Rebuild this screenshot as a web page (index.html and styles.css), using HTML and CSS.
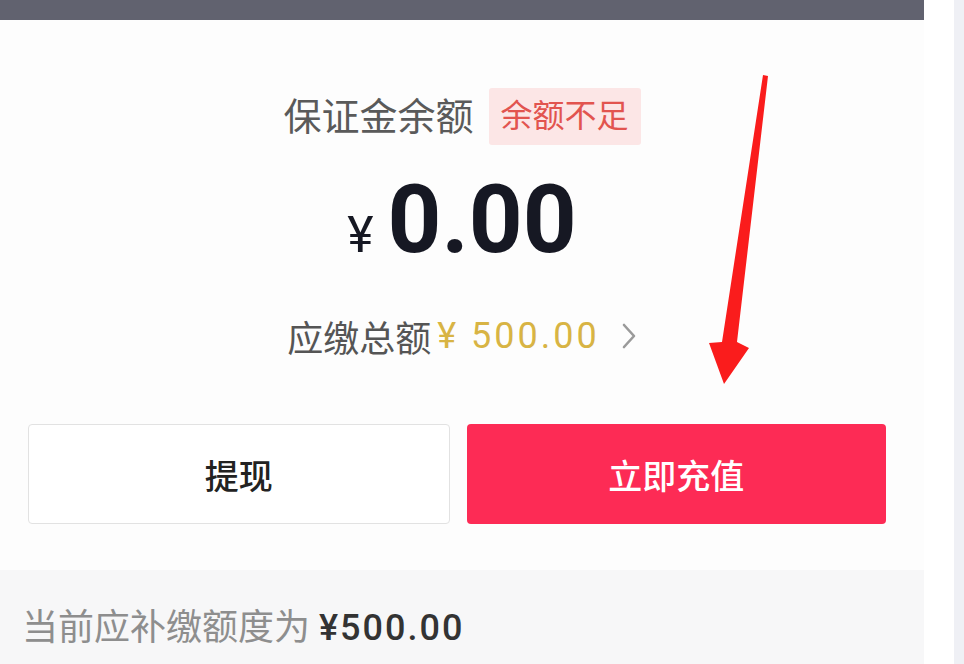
FILE: index.html
```html
<!DOCTYPE html>
<html lang="zh-CN">
<head>
    <meta charset="UTF-8">
    <meta name="viewport" content="width=device-width, initial-scale=1.0">
    <title>保证金</title>
    <link rel="stylesheet" href="styles.css">
</head>
<body>
    <div class="page">
        <div class="main">
            <div class="top-bar"></div>

            <div class="balance">
                <div class="balance-title">
                    <span class="label">保证金余额</span>
                    <span class="badge">余额不足</span>
                </div>
                <div class="amount">
                    <span class="yen">¥</span><span class="num">0.00</span>
                </div>
                <div class="total">
                    <span class="total-label">应缴总额</span>
                    <span class="total-num">¥ 500.00</span>
                    <svg class="chevron" width="16" height="28" viewBox="0 0 16 28">
                        <path d="M3 3 L13 14 L3 25" fill="none" stroke="#9a9a9a" stroke-width="2.6" stroke-linecap="round" stroke-linejoin="round"/>
                    </svg>
                </div>
            </div>

            <div class="actions">
                <button class="btn btn-plain">提现</button>
                <button class="btn btn-primary">立即充值</button>
            </div>

            <div class="notice">
                当前应补缴额度为 <span class="notice-num">¥500.00</span>
            </div>

            <!-- 标注箭头 -->
            <svg class="arrow" width="964" height="664" viewBox="0 0 964 664">
                <polygon points="763,75 768,76 737,342 749,348 724,384 709,343 722,342" fill="#fa1c1c"/>
            </svg>
        </div>
        <div class="side"></div>
    </div>
</body>
</html>
```

FILE: styles.css
```css
body {
    margin: 0;
    background: #ffffff;
    font-family: "Roboto", "Noto Sans CJK SC", sans-serif;
    overflow: hidden;
}
.page {
    display: flex;
    height: 664px;
}
.main {
    width: 924px;
    background: #fdfdfd;
    display: flex;
    flex-direction: column;
}
.side {
    width: 40px;
    background: linear-gradient(90deg, #ffffff 0, #ffffff 30px, #eff0f5 30px);
}
.top-bar {
    height: 20px;
    background: #61626f;
}
.balance {
    display: flex;
    flex-direction: column;
    align-items: center;
}
.balance-title {
    margin-top: 68px;
    display: flex;
    align-items: center;
    gap: 15px;
    height: 57px;
}
.label {
    font-size: 38px;
    color: #5a5a5a;
    line-height: 1;
}
.badge {
    font-size: 32px;
    color: #e2544f;
    background: #fce6e6;
    padding: 0 12px;
    height: 57px;
    line-height: 57px;
    border-radius: 3px;
}
.amount {
    margin-top: 28px;
    display: flex;
    align-items: baseline;
    line-height: 1;
    color: #161823;
}
.yen {
    font-size: 50px;
    margin-right: 14px;
}
.num {
    font-size: 94px;
    font-weight: bold;
}
.total {
    margin-top: 49px;
    display: flex;
    align-items: center;
    height: 40px;
    font-size: 36px;
}
.total-label {
    color: #555555;
}
.total-num {
    color: #d8b444;
    margin-left: 6px;
    letter-spacing: 3px;
}
.chevron {
    margin-left: 21px;
}
.actions {
    margin-top: 68px;
    display: flex;
    gap: 17px;
    padding: 0 38px 0 28px;
}
.btn {
    flex: 1;
    height: 100px;
    border-radius: 4px;
    font-family: "Noto Sans CJK SC", sans-serif;
    font-size: 34px;
    font-weight: 500;
    cursor: pointer;
}
.btn-plain {
    background: #ffffff;
    border: 1px solid #e2e2e2;
    color: #222222;
}
.btn-primary {
    background: #fd2b55;
    border: none;
    color: #ffffff;
}
.notice {
    margin-top: 46px;
    flex: 1;
    background: #f7f7f8;
    padding: 38px 0 0 22px;
    font-size: 36px;
    line-height: 40px;
    color: #8e8e8e;
}
.notice-num {
    color: #333333;
    letter-spacing: 2px;
    font-weight: 500;
}
/* 标注箭头 */
.arrow {
    position: absolute;
    left: 0;
    top: 0;
    pointer-events: none;
}
```
